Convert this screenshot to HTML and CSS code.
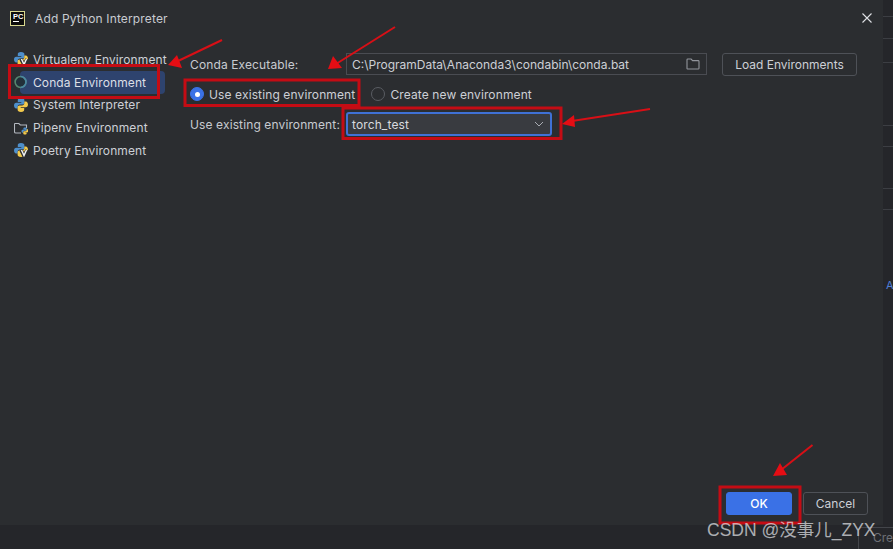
FILE: index.html
```html
<!DOCTYPE html>
<html lang="en">
<head>
<meta charset="utf-8">
<title>Add Python Interpreter</title>
<link rel="stylesheet" href="styles.css">
</head>
<body>
<svg class="defs" width="0" height="0" aria-hidden="true">
  <symbol id="py" viewBox="0 0 16 16">
    <path fill="#4e8fcb" d="M8 1C5.400 1 4.800 2 4.800 3.200V5h3.500v.7H3.200C1.800 5.700 1 6.900 1 8.400s.8 3 2.200 3h1.500V9.800c0-1.300 1-2.200 2.200-2.200h2.700c1 0 1.800-.8 1.800-1.800V3.200C11.400 2 10.500 1 8 1z"/>
    <path fill="#f2c94c" d="M8 15c2.600 0 3.200-1 3.200-2.200V11H7.700v-.7h5.100c1.400 0 2.200-1.200 2.200-2.700s-.8-3-2.200-3h-1.500v1.600c0 1.300-1 2.200-2.200 2.200H6.400c-1 0-1.800.8-1.800 1.800v2.600C4.600 14 5.500 15 8 15z"/>
  </symbol>
  <symbol id="vmark" viewBox="0 0 16 16">
    <path fill="none" stroke="#2b2d30" stroke-width="3.500" d="M8 8l3 6 3-6"/>
    <path fill="none" stroke="#f2f2f2" stroke-width="1.500" d="M8.500 8l2.500 5.500L13.500 8"/>
  </symbol>
</svg>

<div class="desktop">
  <section class="dialog">
    <header class="titlebar">
      <span class="pc-logo"><span class="pc-text">PC</span><span class="pc-bar"></span></span>
      <h1 class="title">Add Python Interpreter</h1>
      <svg class="close" width="14" height="14" viewBox="0 0 14 14"><path d="M2.500 2.500l9 9M11.500 2.500l-9 9" stroke="#dfe1e5" stroke-width="1.100"/></svg>
    </header>

    <div class="body">
      <nav class="sidebar">
        <div class="nav-item">
          <svg class="nav-icon" viewBox="1 1 14 14"><use href="#py" width="16" height="16"/><use href="#vmark" width="16" height="16"/></svg>
          <span>Virtualenv Environment</span>
        </div>
        <div class="nav-item nav-selected">
          <svg class="nav-icon" viewBox="0 0 16 16"><circle cx="7.500" cy="8" r="6.200" fill="#22303a" stroke="#55866f" stroke-width="1.800"/><path d="M7.500 1.800a6.200 6.200 0 0 1 0 12.400" fill="none" stroke="#4a87a3" stroke-width="1.800"/></svg>
          <span>Conda Environment</span>
        </div>
        <div class="nav-item">
          <svg class="nav-icon" viewBox="1 1 14 14"><use href="#py" width="16" height="16"/></svg>
          <span>System Interpreter</span>
        </div>
        <div class="nav-item">
          <svg class="nav-icon" viewBox="1 1 14 14"><path d="M1.500 3.500h4.300l1.500 1.500h6.200v3M8 13H2.800c-.7 0-1.300-.5-1.300-1.200V3.500" fill="none" stroke="#b4b8bf" stroke-width="1.100"/><use href="#py" x="8" y="7" width="8" height="8"/></svg>
          <span>Pipenv Environment</span>
        </div>
        <div class="nav-item">
          <svg class="nav-icon" viewBox="1 1 14 14"><use href="#py" width="16" height="16"/><use href="#vmark" width="16" height="16"/></svg>
          <span>Poetry Environment</span>
        </div>
      </nav>

      <main class="form">
        <div class="row row-exec">
          <label class="label">Conda Executable:</label>
          <div class="path-field">
            <span class="path-text">C:\ProgramData\Anaconda3\condabin\conda.bat</span>
            <svg class="folder" width="14" height="14" viewBox="0 0 14 14"><path d="M1 11.500V2.800c0-.5.3-.8.8-.8h3.300l1.500 1.600h5.600c.5 0 .8.300.8.800v6.800c0 .5-.3.800-.8.800H1.800c-.5 0-.8-.3-.8-.5z" fill="none" stroke="#92959c" stroke-width="1.100"/></svg>
          </div>
          <button class="btn btn-load" type="button">Load Environments</button>
        </div>

        <div class="row row-radio">
          <span class="radio-option">
            <span class="radio radio-on"></span>
            <span>Use existing environment</span>
          </span>
          <span class="radio-option">
            <span class="radio"></span>
            <span>Create new environment</span>
          </span>
        </div>

        <div class="row row-combo">
          <label class="label">Use existing environment:</label>
          <div class="combo">
            <span>torch_test</span>
            <svg width="10" height="6" viewBox="0 0 10 6"><path d="M1 1l4 4 4-4" fill="none" stroke="#a8abb2" stroke-width="1"/></svg>
          </div>
        </div>
      </main>
    </div>

    <footer class="footer">
      <button class="btn btn-ok" type="button">OK</button>
      <button class="btn btn-cancel" type="button">Cancel</button>
    </footer>
  </section>

  <aside class="backdrop-strip">
    <span class="strip-line strip-a"></span>
    <span class="strip-line strip-b"></span>
    <span class="strip-line strip-c"></span>
    <span class="strip-line strip-d"></span>
    <span class="strip-line strip-e"></span>
    <span class="strip-line strip-f"></span>
    <span class="strip-line strip-g"></span>
    <span class="strip-link">A</span>
  </aside>
  <div class="backdrop-bottom">
    <span class="backdrop-btn">Cre</span>
  </div>
</div>

<svg class="annotations" width="893" height="549" viewBox="0 0 893 549" aria-hidden="true">
  <g class="anno-box">
    <rect x="9.500" y="65.500" width="149" height="32"/>
    <rect x="185" y="80" width="174" height="25.500"/>
    <rect x="343" y="108" width="218" height="30.500"/>
    <rect x="720" y="487" width="80" height="36"/>
  </g>
  <g class="anno-line">
    <path d="M222 40L176 62"/>
    <path d="M395 27L336 64"/>
    <path d="M650 109L572 121"/>
    <path d="M812.500 445L781 470"/>
  </g>
  <g class="anno-head">
    <polygon points="168,65 182,68 177,55"/>
    <polygon points="328,69 342,68 333,56"/>
    <polygon points="562,124 575,127 574,115"/>
    <polygon points="773,476 787,475 780,463"/>
  </g>
</svg>

<div class="watermark">CSDN @没事儿_ZYX</div>
</body>
</html>
```

FILE: styles.css
```css
* { box-sizing: border-box; }

html, body {
  margin: 0;
  padding: 0;
  width: 893px;
  height: 549px;
  overflow: hidden;
  background: #26272b;
  font-family: Inter, "Noto Sans", sans-serif;
  font-size: 12px;
  color: #cdd0d6;
}

.defs { position: absolute; }

.desktop {
  display: grid;
  grid-template-columns: 883px 10px;
  grid-template-rows: 525px 24px;
  width: 893px;
  height: 549px;
}

/* dialog */
.dialog {
  display: flex;
  flex-direction: column;
  background: #2b2d30;
}

.titlebar {
  display: flex;
  align-items: center;
  height: 36px;
  padding: 0 9px 0 10px;
}

.pc-logo {
  display: flex;
  flex-direction: column;
  width: 15px;
  height: 15px;
  padding: 1px 2px;
  background: #0c0c0c;
  border: 1px solid #d9d98f;
  flex: none;
}

.pc-text {
  font-size: 7.500px;
  font-weight: 700;
  line-height: 7px;
  color: #fff;
  font-family: "Liberation Sans", sans-serif;
}

.pc-bar {
  width: 6px;
  height: 1px;
  margin-top: 1px;
  background: #fff;
}

.title {
  flex: 1;
  margin: 0 0 0 10px;
  font-size: 12px;
  font-weight: 400;
  letter-spacing: .15px;
  color: #c8cbd0;
}

.body {
  display: flex;
  flex: 1;
  min-height: 0;
}

/* sidebar */
.sidebar {
  display: flex;
  flex-direction: column;
  width: 190px;
  padding: 12px 0 0 14px;
  flex: none;
}

.nav-item {
  display: flex;
  align-items: center;
  gap: 5px;
  height: 22.750px;
  letter-spacing: .1px;
  white-space: nowrap;
}

.nav-icon {
  width: 14px;
  height: 14px;
  flex: none;
}

.nav-selected {
  position: relative;
  color: #dcdfe6;
}

.nav-selected::before {
  content: "";
  position: absolute;
  left: 6px;
  top: 0;
  width: 145px;
  height: 23px;
  border-radius: 4px;
  background: #2e436e;
}

.nav-selected > * { position: relative; }

/* form */
.form {
  display: flex;
  flex-direction: column;
  flex: 1;
  padding-top: 17px;
}

.row {
  display: flex;
  align-items: center;
  letter-spacing: .12px;
  white-space: nowrap;
}

.row-exec { height: 22px; }

.row-radio {
  height: 18px;
  margin-top: 10px;
  gap: 16px;
}

.row-combo {
  height: 24px;
  margin-top: 9px;
}

.label {
  width: 156px;
  flex: none;
  color: #c8cbd0;
}

.path-field {
  display: flex;
  align-items: center;
  justify-content: space-between;
  width: 361px;
  height: 22px;
  padding: 0 6px 0 5px;
  border: 1px solid #4a4c52;
  letter-spacing: 0;
}

.folder { flex: none; }

.radio-option {
  display: flex;
  align-items: center;
  gap: 5px;
}

.radio {
  width: 14px;
  height: 14px;
  border: 1px solid #5a5d63;
  border-radius: 50%;
  background: #2b2d30;
  flex: none;
}

.radio-on {
  position: relative;
  background: #3a71e6;
  border-color: #3a71e6;
}

.radio-on::after {
  content: "";
  position: absolute;
  left: 3.500px;
  top: 3.500px;
  width: 5px;
  height: 5px;
  border-radius: 50%;
  background: #fff;
}

.combo {
  display: flex;
  align-items: center;
  justify-content: space-between;
  width: 206px;
  height: 24px;
  padding: 0 6px 0 4px;
  background: #393b40;
  border: 2px solid #3f71d6;
  border-radius: 3px;
  color: #d8dadf;
}

/* buttons */
.btn {
  height: 23px;
  padding: 0;
  border: 1px solid #4e5157;
  border-radius: 3px;
  background: transparent;
  color: #cdd0d6;
  font: inherit;
}

.btn-load {
  width: 135px;
  margin-left: 15px;
}

.footer {
  display: flex;
  justify-content: flex-end;
  gap: 11px;
  padding: 0 15px 10px 0;
}

.btn-ok {
  width: 66px;
  border-color: #3a71e6;
  background: #3a71e6;
  color: #fff;
  font-weight: 500;
}

.btn-cancel { width: 65px; }

/* what is visible behind the dialog */
.backdrop-strip {
  display: flex;
  flex-direction: column;
  grid-row: 1;
  grid-column: 2;
  background: #25262a;
  overflow: hidden;
}

.strip-line {
  display: block;
  flex: none;
  height: 1px;
  background: #3c3e43;
}

.strip-a { margin-top: 16px; }
.strip-b { margin-top: 21px; }
.strip-c { margin-top: 23px; }
.strip-d { margin-top: 62px; }
.strip-e { margin-top: 20px; }
.strip-f { margin-top: 41px; }
.strip-g { margin-top: 20px; }

.strip-link {
  margin: 68px 0 0 3px;
  font-size: 11px;
  color: #4f7fd6;
}

.backdrop-bottom {
  display: flex;
  grid-row: 2;
  grid-column: 1 / 3;
  overflow: hidden;
  padding: 2px 0 0 858px;
  background: #25262a;
}

.backdrop-btn {
  flex: none;
  width: 35px;
  height: 24px;
  padding: 2px 0 0 14px;
  border: 1px solid #43454a;
  border-right: 0;
  border-radius: 3px 0 0 3px;
  color: #6d7076;
}

/* red annotations drawn over the screenshot */
.annotations {
  position: absolute;
  left: 0;
  top: 0;
  pointer-events: none;
}

.anno-box rect {
  fill: none;
  stroke: #c40c14;
  stroke-width: 3px;
}

.anno-line path {
  fill: none;
  stroke: #d80f16;
  stroke-width: 2px;
}

.anno-head polygon { fill: #e50d14; }

.watermark {
  position: absolute;
  left: 707px;
  top: 519px;
  font-family: "Liberation Sans", "Noto Sans CJK SC", sans-serif;
  font-size: 17.500px;
  line-height: 22px;
  white-space: nowrap;
  color: rgba(226, 228, 232, .72);
}
```
